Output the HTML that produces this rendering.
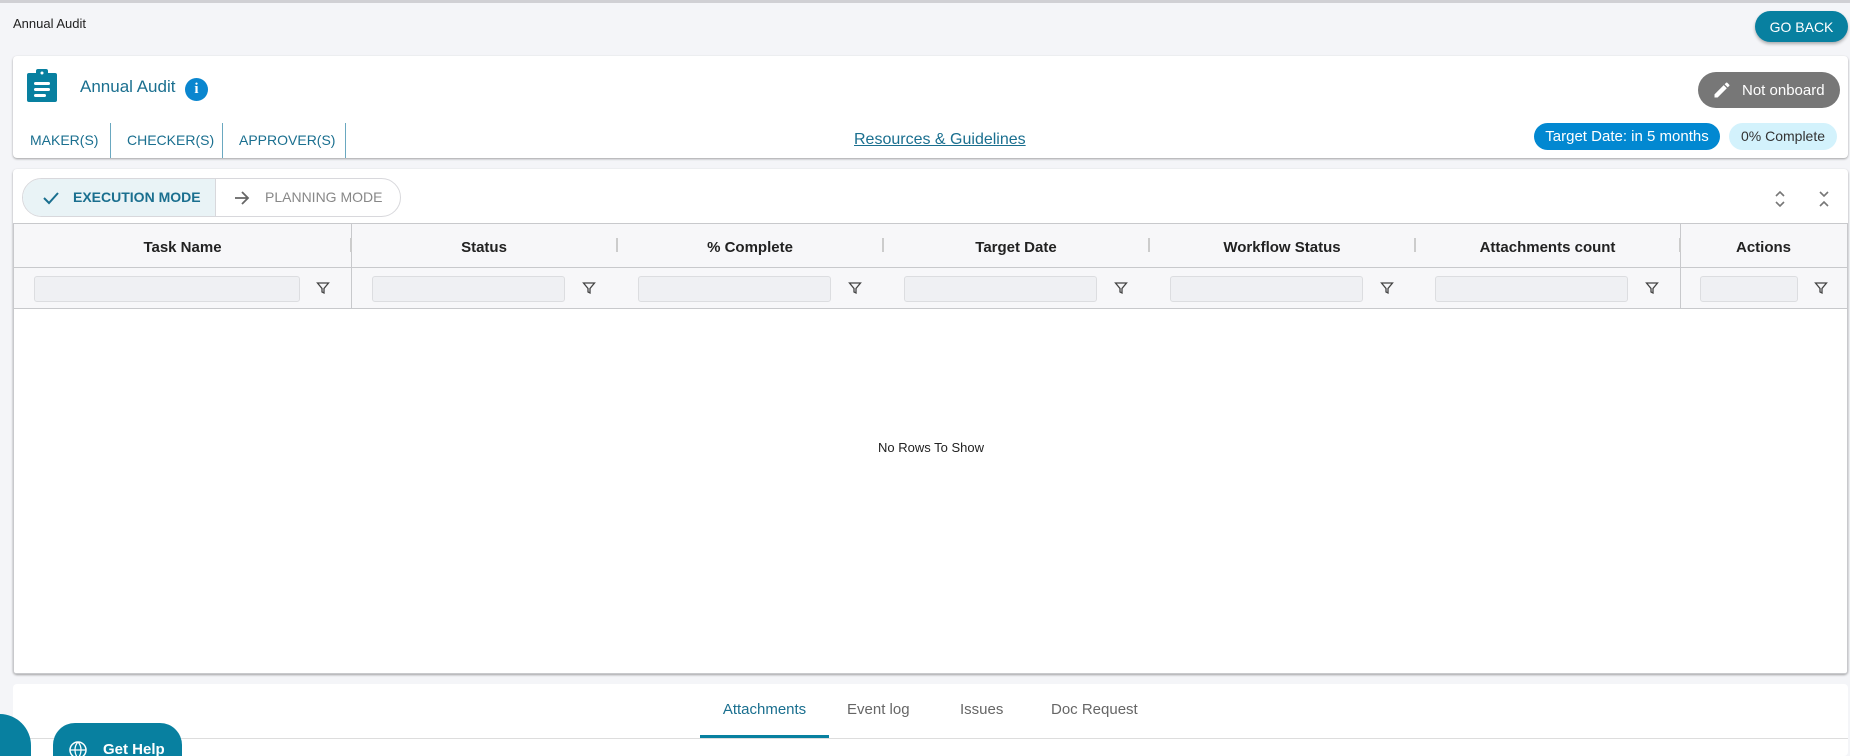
<!DOCTYPE html>
<html style="width:1850px;height:756px;overflow:hidden"><head><meta charset="utf-8"><style>
*{box-sizing:border-box;margin:0;padding:0}
body{width:1850px;height:756px;overflow:hidden;background:#f4f5f8;font-family:"Liberation Sans",sans-serif;position:relative;color:#222}
.abs{position:absolute}
.card{position:absolute;background:#fff;border-radius:4px;box-shadow:0 1px 2px rgba(0,0,0,.35)}
.hdr{position:absolute;top:225px;height:44px;font-weight:bold;font-size:15px;color:#222;display:flex;align-items:center;justify-content:center}
.flt{position:absolute;top:276px;height:26px;background:#eff0f3;border:1px solid #dcdde0;border-radius:3px}
.fic{position:absolute;top:281px}
.grip{position:absolute;top:238px;width:2px;height:14px;background:#ccc}
</style></head><body>
<div class="abs" style="left:0;top:0;width:1850px;height:3px;background:#d0d0d4"></div>
<div class="abs" style="left:13px;top:16px;font-size:13px;color:#222">Annual Audit</div>
<div class="abs" style="left:1755px;top:11px;width:93px;height:31px;border-radius:16px;background:#0880a0;color:#fff;font-size:14px;display:flex;align-items:center;justify-content:center;box-shadow:0 2px 3px rgba(0,0,0,.3)">GO BACK</div>

<div class="card" style="left:13px;top:56px;width:1835px;height:102px"></div>
<svg class="abs" style="left:27px;top:69px" width="30" height="33" viewBox="0 0 30 33"><rect x="0" y="4" width="30" height="29" rx="2" fill="#0880a0"/><rect x="9" y="0" width="12" height="8" rx="2" fill="#0880a0"/><circle cx="15" cy="4" r="1.5" fill="#fff"/><rect x="7" y="13" width="16" height="3" rx="1.5" fill="#fff"/><rect x="7" y="19" width="16" height="3" rx="1.5" fill="#fff"/><rect x="7" y="25" width="12" height="3" rx="1.5" fill="#fff"/></svg>
<div class="abs" style="left:80px;top:77px;font-size:17px;color:#1a6f8f">Annual Audit</div>
<div class="abs" style="left:185px;top:78px;width:23px;height:23px;border-radius:50%;background:#0a86cf;color:#fff;font-weight:bold;font-size:15px;text-align:center;line-height:23px;font-family:'Liberation Serif',serif">i</div>
<div class="abs" style="left:1698px;top:72px;width:142px;height:36px;border-radius:18px;background:#777;color:#fff;font-size:15px;display:flex;align-items:center;padding-left:14px"><svg width="20" height="20" viewBox="0 0 24 24" style="margin-right:10px"><path d="M3 17.25V21h3.75L17.8 9.94l-3.75-3.75L3 17.25zM20.7 7.04a1 1 0 000-1.41l-2.34-2.34a1 1 0 00-1.41 0l-1.83 1.83 3.75 3.75 1.83-1.83z" fill="#fff"/></svg>Not onboard</div>
<div class="abs" style="left:30px;top:123px;height:35px;font-size:14px;color:#1a6f8f;line-height:35px">MAKER(S)</div>
<div class="abs" style="left:110px;top:123px;width:1px;height:35px;background:#6aa8c0"></div>
<div class="abs" style="left:127px;top:123px;font-size:14px;color:#1a6f8f;line-height:35px">CHECKER(S)</div>
<div class="abs" style="left:222px;top:123px;width:1px;height:35px;background:#6aa8c0"></div>
<div class="abs" style="left:239px;top:123px;font-size:14px;color:#1a6f8f;line-height:35px">APPROVER(S)</div>
<div class="abs" style="left:345px;top:123px;width:1px;height:35px;background:#6aa8c0"></div>
<div class="abs" style="left:854px;top:131px;font-size:16px;color:#1a6f8f;text-decoration:underline">Resources &amp; Guidelines</div>
<div class="abs" style="left:1534px;top:123px;width:186px;height:27px;border-radius:14px;background:#0288d1;color:#fff;font-size:15px;text-align:center;line-height:27px">Target Date: in 5 months</div>
<div class="abs" style="left:1729px;top:123px;width:108px;height:27px;border-radius:14px;background:#d3f2fc;color:#333;font-size:14px;text-align:center;line-height:27px">0% Complete</div>

<div class="card" style="left:13px;top:169px;width:1835px;height:505px"></div>
<div class="abs" style="left:22px;top:178px;width:379px;height:39px;border:1px solid #d8d8dc;border-radius:20px;overflow:hidden;background:#fff">
<div class="abs" style="left:0;top:0;width:193px;height:39px;background:#e9f3f6;border-right:1px solid #d8d8dc"></div>
<svg class="abs" style="left:19px;top:11px" width="18" height="16" viewBox="0 0 18 16"><path d="M2 8l5 5L16 3" stroke="#1a6f8f" stroke-width="2" fill="none"/></svg>
<div class="abs" style="left:50px;top:10px;font-size:14px;font-weight:bold;color:#1a6f8f">EXECUTION MODE</div>
<svg class="abs" style="left:210px;top:11px" width="18" height="16" viewBox="0 0 18 16"><path d="M2 8h13M9 2l6 6-6 6" stroke="#666" stroke-width="1.8" fill="none"/></svg>
<div class="abs" style="left:242px;top:10px;font-size:14px;color:#888">PLANNING MODE</div>
</div>
<svg class="abs" style="left:1773px;top:189px" width="14" height="20" viewBox="0 0 14 20"><path d="M3 7l4-4 4 4M3 13l4 4 4-4" stroke="#777" stroke-width="1.6" fill="none"/></svg>
<svg class="abs" style="left:1817px;top:189px" width="14" height="20" viewBox="0 0 14 20"><path d="M3 3l4 4 4-4M3 17l4-4 4 4" stroke="#777" stroke-width="1.6" fill="none"/></svg>

<div class="abs" style="left:13px;top:223px;width:1835px;height:451px;border:1px solid #c8c9cc;border-radius:0 0 3px 3px"></div>
<div class="abs" style="left:14px;top:224px;width:1833px;height:85px;background:#f7f7f9;border-bottom:1px solid #c8c9cc"></div>
<div class="abs" style="left:14px;top:267px;width:1833px;height:1px;background:#c8c9cc"></div>
<div class="abs" style="left:351px;top:224px;width:1px;height:85px;background:#c8c9cc"></div>
<div class="abs" style="left:1680px;top:224px;width:1px;height:85px;background:#c8c9cc"></div>
<div class="hdr" style="left:14px;width:337px">Task Name</div>
<div class="hdr" style="left:351px;width:266px">Status</div>
<div class="hdr" style="left:617px;width:266px">% Complete</div>
<div class="hdr" style="left:883px;width:266px">Target Date</div>
<div class="hdr" style="left:1149px;width:266px">Workflow Status</div>
<div class="hdr" style="left:1415px;width:265px">Attachments count</div>
<div class="hdr" style="left:1680px;width:167px">Actions</div>
<div class="grip" style="left:350px"></div><div class="grip" style="left:616px"></div><div class="grip" style="left:882px"></div><div class="grip" style="left:1148px"></div><div class="grip" style="left:1414px"></div><div class="grip" style="left:1679px"></div>
<div class="flt" style="left:34px;width:266px"></div>
<div class="flt" style="left:372px;width:193px"></div>
<div class="flt" style="left:638px;width:193px"></div>
<div class="flt" style="left:904px;width:193px"></div>
<div class="flt" style="left:1170px;width:193px"></div>
<div class="flt" style="left:1435px;width:193px"></div>
<div class="flt" style="left:1700px;width:98px"></div>
<svg width="0" height="0" style="position:absolute"><defs><symbol id="f" viewBox="0 0 14 14"><path d="M1.5 2h11L8 7.5V12L6 11V7.5z" stroke="#444" stroke-width="1.3" fill="none"/></symbol></defs></svg>
<svg class="fic" style="left:316px" width="14" height="14"><use href="#f"/></svg>
<svg class="fic" style="left:582px" width="14" height="14"><use href="#f"/></svg>
<svg class="fic" style="left:848px" width="14" height="14"><use href="#f"/></svg>
<svg class="fic" style="left:1114px" width="14" height="14"><use href="#f"/></svg>
<svg class="fic" style="left:1380px" width="14" height="14"><use href="#f"/></svg>
<svg class="fic" style="left:1645px" width="14" height="14"><use href="#f"/></svg>
<svg class="fic" style="left:1814px" width="14" height="14"><use href="#f"/></svg>
<div class="abs" style="left:831px;top:440px;width:200px;text-align:center;font-size:13px;color:#222">No Rows To Show</div>

<div class="card" style="left:13px;top:684px;width:1835px;height:72px;box-shadow:none"></div>
<div class="abs" style="left:13px;top:738px;width:1835px;height:1px;background:#ddd"></div>
<div class="abs" style="left:700px;top:701px;width:129px;text-align:center;font-size:15px;color:#1a6f8f">Attachments</div>
<div class="abs" style="left:700px;top:735px;width:129px;height:3px;background:#0880a0"></div>
<div class="abs" style="left:847px;top:701px;font-size:15px;color:#666">Event log</div>
<div class="abs" style="left:960px;top:701px;font-size:15px;color:#666">Issues</div>
<div class="abs" style="left:1051px;top:701px;font-size:15px;color:#666">Doc Request</div>
<div class="abs" style="left:-32px;top:714px;width:63px;height:42px;border-radius:32px 32px 0 0;background:#0880a0"></div>
<div class="abs" style="left:53px;top:723px;width:129px;height:33px;border-radius:22px 22px 0 0;background:#0880a0;color:#fff;font-weight:bold;font-size:15px;padding:19px 0 0 50px;overflow:hidden;line-height:15px">Get Help</div>
<svg class="abs" style="left:68px;top:740px" width="20" height="16" viewBox="0 0 20 16"><circle cx="10" cy="10" r="8" stroke="#fff" stroke-width="1.5" fill="none"/><path d="M2 10h16M10 2c-4 4-4 12 0 16M10 2c4 4 4 12 0 16" stroke="#fff" stroke-width="1.3" fill="none"/></svg>
</body></html>
